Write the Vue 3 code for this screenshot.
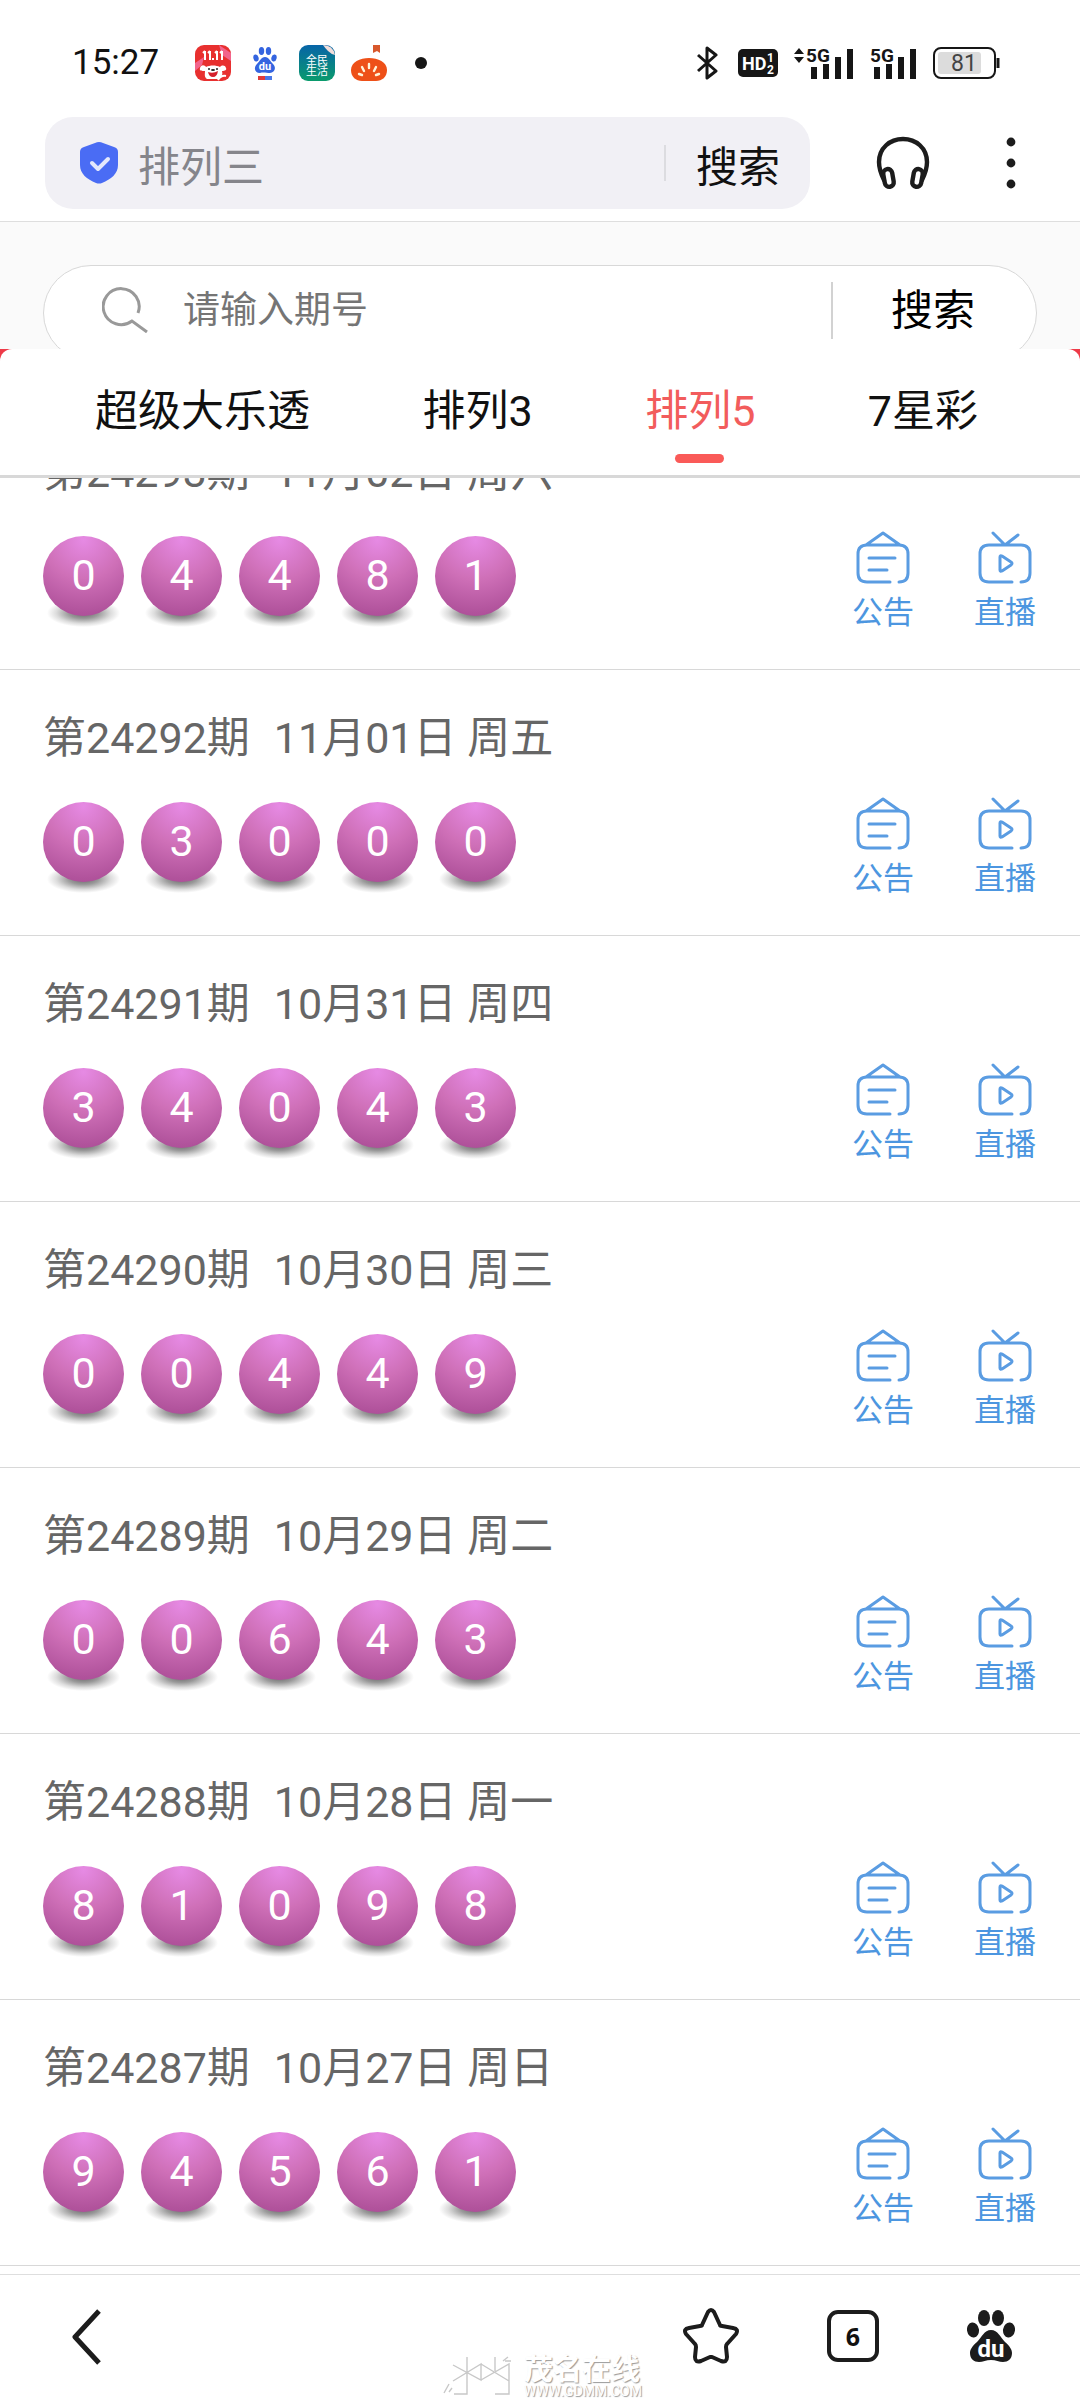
<script setup>
import { ref } from 'vue'

const keyword = ref('')
const address = ref('排列三')
const active = ref('排列5')
const tabs = ['超级大乐透', '排列3', '排列5', '7星彩']

const draws = [
  { issue: '24293', date: '11月02日', day: '周六', balls: [0, 4, 4, 8, 1] },
  { issue: '24292', date: '11月01日', day: '周五', balls: [0, 3, 0, 0, 0] },
  { issue: '24291', date: '10月31日', day: '周四', balls: [3, 4, 0, 4, 3] },
  { issue: '24290', date: '10月30日', day: '周三', balls: [0, 0, 4, 4, 9] },
  { issue: '24289', date: '10月29日', day: '周二', balls: [0, 0, 6, 4, 3] },
  { issue: '24288', date: '10月28日', day: '周一', balls: [8, 1, 0, 9, 8] },
  { issue: '24287', date: '10月27日', day: '周日', balls: [9, 4, 5, 6, 1] },
]
</script>

<template>
  <div class="screen">
    <header class="status">
      <time class="clock">15:27</time>
      <div class="apps">
        <svg width="36" height="36" viewBox="0 0 36 36">
          <rect width="36" height="36" rx="9" fill="#e8302f" />
          <path d="M24 0 L36 8 V16 L27 10 Z M0 18 L9 12 L7 20 L0 26 Z" fill="#f2648c" />
          <path d="M10 6v9M15 6v9M22 6v9M27 6v9M8 8l2-2M13 8l2-2M20 8l2-2M25 8l2-2M17 14h2" stroke="#fff" stroke-width="2" fill="none" />
          <path d="M5 23c1-4 5-3 6-1 4-2 10-2 14 0 2-2 5-2 6 1 1 2-1 3-4 3 1 3 0 6-3 8H12c-3-2-2-5-2-8-3 0-6 0-5-3z" fill="#fff" />
          <circle cx="14" cy="24" r="1" fill="#222" /><circle cx="22" cy="24" r="1" fill="#222" />
          <path d="M13 27q5 2 10-1-1 6-5 6-4 0-5-5z" fill="#d5202c" />
          <ellipse cx="18" cy="25" rx="2" ry="1" fill="#222" />
          <path d="M23 35q3-5 8-4" stroke="#fff" stroke-width="2" fill="none" />
        </svg>
        <svg class="du-small" width="24" height="34" viewBox="0 0 24 34">
          <g fill="#3464e0">
            <ellipse cx="3" cy="12" rx="2.6" ry="3.6" transform="rotate(-15 3 12)" />
            <ellipse cx="8.5" cy="5" rx="2.7" ry="4" />
            <ellipse cx="15.5" cy="5" rx="2.7" ry="4" />
            <ellipse cx="21" cy="12" rx="2.6" ry="3.6" transform="rotate(15 21 12)" />
            <path d="M12 11c4 0 5 4 8 7 4 4 1 9-3 9-3 0-7-1-10 0-5 0-7-5-3-9 3-3 4-7 8-7z" />
          </g>
          <text x="12" y="24" text-anchor="middle" font-size="11" font-weight="700" fill="#fff">du</text>
          <path d="M5 30h7v4H5z" fill="#e03a3a" /><path d="M12 30h7v4h-7z" fill="#4a78e8" />
        </svg>
        <svg width="36" height="36" viewBox="0 0 36 36">
          <defs>
            <linearGradient id="teal" x1="0" y1="0" x2="0" y2="1">
              <stop offset="0" stop-color="#0764a8" /><stop offset="1" stop-color="#0a9b6c" />
            </linearGradient>
          </defs>
          <rect width="36" height="36" rx="9" fill="url(#teal)" />
          <path d="M24 0q10 0 12 10-4-1-7-4t-5-6z" fill="#f1ddda" />
          <g fill="#fff" font-size="11">
            <text x="7" y="19">全</text><text x="18" y="19">民</text>
            <text x="7" y="30">生</text><text x="18" y="30">活</text>
          </g>
        </svg>
        <svg width="36" height="36" viewBox="0 0 36 36">
          <path d="M22 0h7v8l-3-2-4 2z" fill="#d8582c" />
          <path d="M18 13c9 0 18 4 18 12 0 7-5 11-11 11H11C5 36 0 32 0 25c0-8 9-12 18-12z" fill="#ee5018" />
          <path d="M18 19v4M11 22l2 4M25 22l-2 4M8 29l3 1M28 29l-3 1" stroke="#fff3d8" stroke-width="2.4" stroke-linecap="round" />
        </svg>
        <i class="more-dot"></i>
      </div>
      <div class="signals">
        <svg width="22" height="34" viewBox="0 0 22 34">
          <path d="M2 9l18 16-9 7V2l9 7L2 25" fill="none" stroke="#161616" stroke-width="3" stroke-linejoin="round" />
        </svg>
        <svg width="40" height="28" viewBox="0 0 40 28">
          <rect width="40" height="28" rx="5" fill="#161616" />
          <text x="4" y="21" font-size="18" font-weight="700" fill="#fff">HD</text>
          <text x="29" y="13" font-size="12" font-weight="700" fill="#fff">1</text>
          <text x="29" y="25" font-size="12" font-weight="700" fill="#fff">2</text>
        </svg>
        <svg width="60" height="34" viewBox="0 0 60 34">
          <path d="M0 8l5-6 5 6zM0 11h10l-5 6z" fill="#161616" />
          <text x="12" y="16" font-size="19" font-weight="700" fill="#161616">5G</text>
          <path d="M17 21h6v12h-6zM29 18h6v15h-6zM41 11h6v22h-6zM53 3h6v30h-6z" fill="#161616" />
        </svg>
        <svg width="47" height="34" viewBox="0 0 47 34">
          <text x="0" y="16" font-size="19" font-weight="700" fill="#161616">5G</text>
          <path d="M4 21h6v12H4zM16 18h6v15h-6zM28 11h6v22h-6zM40 3h6v30h-6z" fill="#161616" />
        </svg>
        <svg width="67" height="32" viewBox="0 0 67 32">
          <rect x="1" y="1" width="61" height="30" rx="7" fill="#fff" stroke="#161616" stroke-width="2" />
          <rect x="5" y="5" width="43" height="22" rx="3" fill="#dcdcdc" />
          <path d="M65 11v10" stroke="#161616" stroke-width="3" />
          <text x="31" y="24" text-anchor="middle" font-size="23" fill="#444">81</text>
        </svg>
      </div>
    </header>

    <div class="browser">
      <form class="address" @submit.prevent>
        <svg width="40" height="42" viewBox="0 0 40 42">
          <path d="M16 1q4-2 8 0l11 4q4 1 4 5v13c0 9-7 14-16 18q-3 1-6 0C8 37 1 32 1 23V10q0-4 4-5z" fill="#4a6cf4" />
          <path d="M13 21l6 6 10-10" fill="none" stroke="#e4e8fc" stroke-width="4" stroke-linecap="round" stroke-linejoin="round" />
        </svg>
        <input v-model="address" aria-label="网址" type="text" />
        <i class="rule"></i>
        <button type="submit">搜索</button>
      </form>
      <button class="tool" aria-label="听">
        <svg width="54" height="54" viewBox="0 0 54 54" fill="none" stroke="#1c1c1c" stroke-width="4.4" stroke-linecap="round" stroke-linejoin="round">
          <path d="M8 44C4 36 3 31 3 26 3 12 14 3 27 3s24 9 24 23c0 5-1 10-5 18" />
          <rect x="8" y="33" width="9" height="18" rx="4.5" transform="rotate(-10 12 42)" />
          <rect x="37" y="33" width="9" height="18" rx="4.5" transform="rotate(10 42 42)" />
        </svg>
      </button>
      <button class="tool" aria-label="更多">
        <svg width="10" height="54" viewBox="0 0 10 54" fill="#1c1c1c">
          <circle cx="5" cy="6" r="4.4" /><circle cx="5" cy="27" r="4.4" /><circle cx="5" cy="48" r="4.4" />
        </svg>
      </button>
    </div>

    <section class="finder">
      <form class="pill" @submit.prevent>
        <svg width="46" height="46" viewBox="0 0 46 46" fill="none" stroke="#999" stroke-width="3">
          <path d="M36 26A18 18 0 1 0 30 34L45 45" />
        </svg>
        <input v-model="keyword" aria-label="期号" type="text" placeholder="请输入期号" />
        <i class="rule"></i>
        <button type="submit">搜索</button>
      </form>
    </section>

    <div class="tabs-back">
      <nav class="tabs">
        <a v-for="t in tabs" :key="t" href="#" :class="{ on: t === active }" @click.prevent="active = t">{{ t }}</a>
      </nav>
    </div>

    <main class="list">
      <article v-for="d in draws" :key="d.issue" class="draw">
        <div class="result">
          <h2><span>第{{ d.issue }}期</span><span>{{ d.date }} {{ d.day }}</span></h2>
          <div class="balls">
            <span v-for="(n, i) in d.balls" :key="i" class="ball">{{ n }}</span>
          </div>
        </div>
        <div class="links">
          <a href="#">
            <svg width="54" height="54" viewBox="0 0 54 54">
              <path d="M34 51H11q-9 0-9-9V23q0-9 9-9h32q9 0 9 9v19q0 9-9 9M10 14L27 2l17 12M13 27h26M13 39h18" />
            </svg>
            <span>公告</span>
          </a>
          <a href="#">
            <svg width="54" height="54" viewBox="0 0 54 54">
              <path d="M34 51H11q-9 0-9-9V23q0-9 9-9h32q9 0 9 9v19q0 9-9 9M15 2l12 12L40 4M22 26q0-2 2-1l9 6q2 1 0 3l-9 6q-2 1-2-1z" />
            </svg>
            <span>直播</span>
          </a>
        </div>
      </article>
    </main>

    <footer class="dock">
      <button aria-label="返回">
        <svg width="30" height="58" viewBox="0 0 30 58">
          <path d="M27 3L3 29l24 26" fill="none" stroke="#1c1c1c" stroke-width="5" stroke-linejoin="round" />
        </svg>
      </button>
      <div class="watermark">
        <svg width="72" height="40" viewBox="0 0 72 40" fill="none" stroke="#c8c8c8" stroke-width="1.4">
          <path d="M10 9l28 15V8L10 25M24 1v37H11M38 24L66 8v30H52M38 8l28 17M52 1v14M1 37l5-9M6 36l3-4M60 5l5-4M62 5h6" />
        </svg>
        <p><strong>茂名在线</strong><small>WWW.GDMM.COM</small></p>
      </div>
      <div class="dock-right">
        <button aria-label="收藏">
          <svg width="56" height="56" viewBox="0 0 56 56">
            <path d="M25 4q3-4 6 0l6 13q0 1 2 1l11 2q6 1 3 6l-9 10q-1 1-1 3l1 10q0 6-6 4l-9-4h-2l-9 4q-6 2-6-4l1-10q0-2-1-3L3 26q-3-5 3-6l11-2q2 0 2-1z" fill="none" stroke="#1c1c1c" stroke-width="4" stroke-linejoin="round" />
          </svg>
        </button>
        <button aria-label="窗口">
          <span class="count">6</span>
        </button>
        <button aria-label="百度">
          <svg width="48" height="52" viewBox="0 0 48 52">
            <g fill="#1c1c1c">
              <ellipse cx="6" cy="20" rx="6" ry="7.5" transform="rotate(-8 6 20)" />
              <ellipse cx="17" cy="8" rx="6" ry="8" />
              <ellipse cx="31" cy="8" rx="6" ry="8" />
              <ellipse cx="42" cy="20" rx="6" ry="7.5" transform="rotate(8 42 20)" />
              <path d="M24 20c7 0 9 7 14 12 5 4 7 8 7 11 0 6-4 9-9 9-4 0-7-2-12-2s-8 2-12 2c-5 0-9-3-9-9 0-3 2-7 7-11 5-5 7-12 14-12z" />
            </g>
            <text x="24" y="47" text-anchor="middle" font-size="24" font-weight="700" fill="#fff">du</text>
          </svg>
        </button>
      </div>
    </footer>
  </div>
</template>

<style>
body {
  margin: 0;
  background: #fff;
}
</style>

<style scoped>
.screen {
  display: flex;
  flex-direction: column;
  height: 100vh;
  overflow: hidden;
  background: #fff;
  color: #111;
  font-family: Roboto, "Noto Sans CJK SC", sans-serif;
}
svg {
  display: block;
  flex: none;
}
button,
input {
  padding: 0;
  border: 0;
  background: none;
  font: inherit;
  color: inherit;
}
input {
  outline: 0;
  min-width: 0;
  flex: 1;
}
a {
  color: inherit;
  text-decoration: none;
}
.rule {
  flex: none;
  width: 2px;
}

/* status bar */
.status {
  display: flex;
  align-items: center;
  box-sizing: border-box;
  height: 117px;
  padding: 8px 80px 0 72px;
}
.clock {
  width: 123px;
  font-size: 35px;
  line-height: 44px;
}
.apps,
.signals {
  display: flex;
  align-items: center;
}
.apps {
  gap: 16px;
  flex: 1;
}
.du-small {
  margin: 0 6px;
}
.more-dot {
  width: 12px;
  height: 12px;
  margin-left: 12px;
  border-radius: 50%;
  background: #161616;
}
.signals {
  gap: 16px;
}
.signals svg:first-child {
  margin-right: 4px;
}

/* address bar */
.browser {
  display: flex;
  align-items: center;
  padding: 0 64px 12px 45px;
  border-bottom: 1px solid #dedede;
}
.address {
  display: flex;
  align-items: center;
  flex: 1;
  min-width: 0;
  height: 92px;
  box-sizing: border-box;
  padding: 0 30px 0 34px;
  border-radius: 28px;
  background: #f1f0f5;
  font-size: 42px;
}
.address input {
  margin-left: 19px;
  color: #85858b;
}
.address .rule {
  height: 36px;
  background: #dcdce0;
}
.address button {
  margin-left: 30px;
}
.tool {
  margin-left: 66px;
}
.tool + .tool {
  margin-left: 76px;
}

/* issue search */
.finder {
  height: 127px;
  box-sizing: border-box;
  padding: 43px 43px 0;
  overflow: hidden;
  background: #fafafa;
}
.pill {
  display: flex;
  align-items: center;
  height: 96px;
  box-sizing: border-box;
  padding: 0 61px 6px 58px;
  border: 1px solid #d8d8d8;
  border-radius: 48px;
  background: #fff;
  font-size: 42px;
  color: #000;
}
.pill input {
  margin-left: 35px;
  font-size: 37px;
}
.pill input::placeholder {
  color: #757575;
  opacity: 1;
}
.pill .rule {
  height: 57px;
  background: #d2d2d2;
}
.pill button {
  margin-left: 58px;
  padding-bottom: 8px;
}

/* game tabs */
.tabs-back {
  background: #ee3a48;
}
.tabs {
  display: flex;
  justify-content: space-between;
  height: 126px;
  padding: 0 102px 0 95px;
  border-bottom: 3px solid #d8d8d8;
  border-radius: 12px 12px 0 0;
  background: #fff;
  font-size: 43px;
  line-height: 124px;
}
.tabs a {
  position: relative;
}
.tabs .on {
  color: #f25c5c;
}
.tabs .on::after {
  content: "";
  position: absolute;
  left: 50%;
  bottom: 12px;
  width: 49px;
  height: 9px;
  margin-left: -25px;
  border-radius: 5px;
  background: #fa5a58;
}

/* draw results */
.list {
  display: flex;
  flex-direction: column;
  justify-content: flex-end;
  flex: 1;
  min-height: 0;
  overflow: hidden;
  padding-bottom: 8px;
}
.draw {
  display: flex;
  flex: none;
  justify-content: space-between;
  align-items: flex-start;
  box-sizing: border-box;
  height: 266px;
  padding: 38px 44px 0 43px;
  border-bottom: 1px solid #d8d8d8;
}
h2 {
  display: flex;
  gap: 24px;
  margin: 0;
  font-size: 43px;
  font-weight: 400;
  line-height: 60px;
  color: #666;
}
.balls {
  display: flex;
  gap: 17px;
  margin-top: 34px;
  isolation: isolate;
}
.ball {
  position: relative;
  width: 81px;
  height: 80px;
  border-radius: 50%;
  background: radial-gradient(circle at 50% 5%, #e68ae4 0, #cf70b8 45%, #b0529b 85%, #a84c98 100%);
  font-size: 43px;
  line-height: 78px;
  text-align: center;
  color: #fff;
}
.ball::after {
  content: "";
  position: absolute;
  z-index: -1;
  left: 4px;
  right: 4px;
  bottom: -11px;
  height: 28px;
  background: radial-gradient(closest-side, #666 0, #999 40%, #ddd 75%, #fff 100%);
}
.links {
  display: flex;
  gap: 60px;
  margin-top: 89px;
}
.links a {
  display: flex;
  flex-direction: column;
  align-items: center;
  font-size: 31px;
  line-height: 36px;
  color: #4c96e0;
}
.links svg {
  margin-bottom: 10px;
  fill: none;
  stroke: #5a9ce2;
  stroke-width: 3;
  stroke-linecap: round;
  stroke-linejoin: round;
}

/* browser dock */
.dock {
  display: flex;
  align-items: flex-start;
  flex: none;
  height: 93px;
  padding: 32px 65px 0 72px;
  border-top: 1px solid #dedede;
}
.dock button {
  margin-top: 1px;
}
.dock-right {
  display: flex;
  align-items: center;
  flex: 1;
  justify-content: flex-end;
  gap: 88px;
}
.count {
  display: block;
  box-sizing: border-box;
  width: 52px;
  height: 52px;
  border: 4px solid #1c1c1c;
  border-radius: 11px;
  font: 700 25px/44px "Noto Sans", sans-serif;
}
.watermark {
  display: flex;
  gap: 9px;
  margin: 49px 0 0 341px;
}
.watermark p {
  display: flex;
  flex-direction: column;
  margin: 0;
  color: #fff;
  text-shadow: 1px 1px 1px #999;
}
.watermark strong {
  font-size: 29px;
  line-height: 28px;
}
.watermark small {
  font-size: 14px;
  line-height: 14px;
}
</style>
